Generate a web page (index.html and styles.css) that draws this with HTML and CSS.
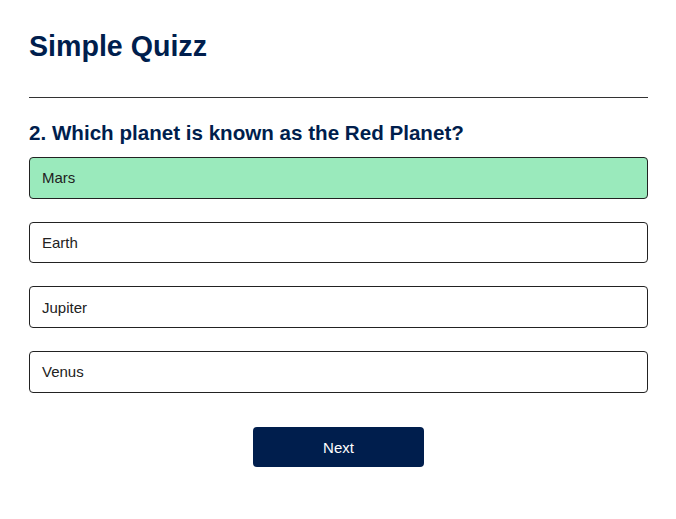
FILE: index.html
```html
<!DOCTYPE html>
<html>
<head>
<meta charset="utf-8">
<link rel="stylesheet" href="styles.css">
</head>
<body>
<div class="app">
  <h1 class="title">Simple Quizz</h1>
  <div class="quiz">
    <h2 class="question">2. Which planet is known as the Red Planet?</h2>
    <div class="answers">
      <button class="btn correct">Mars</button>
      <button class="btn">Earth</button>
      <button class="btn">Jupiter</button>
      <button class="btn">Venus</button>
    </div>
    <button class="next">Next</button>
  </div>
</div>
</body>
</html>
```
FILE: styles.css
```css
* { box-sizing: border-box; }
body {
  margin: 0;
  background: #fff;
  font-family: "Liberation Sans", Arial, sans-serif;
}
.app {
  padding: 28px 28px 0 29px;
}
.title {
  margin: 0;
  font-size: 28.6px;
  font-weight: 700;
  color: #001e4d;
  line-height: 36px;
  padding-bottom: 33px;
  border-bottom: 1px solid #333;
}
.quiz {
  padding-top: 23px;
}
.question {
  margin: 0 0 12px;
  font-size: 20.6px;
  line-height: 24px;
  color: #001e4d;
  font-weight: 700;
}
.answers {
  display: flex;
  flex-direction: column;
  gap: 23.2px;
}
.btn {
  display: block;
  width: 100%;
  height: 41.5px;
  text-align: left;
  padding: 0 12px;
  font-family: "Liberation Sans", Arial, sans-serif;
  font-size: 15px;
  color: #222;
  background: #fff;
  border: 1px solid #222;
  border-radius: 4px;
}
.btn.correct {
  background: #9aeabc;
}
.next {
  display: block;
  margin: 34.5px auto 0;
  width: 171px;
  height: 40px;
  background: #001e4d;
  color: #fff;
  border: 0;
  border-radius: 4px;
  font-family: "Liberation Sans", Arial, sans-serif;
  font-size: 15px;
}
```
